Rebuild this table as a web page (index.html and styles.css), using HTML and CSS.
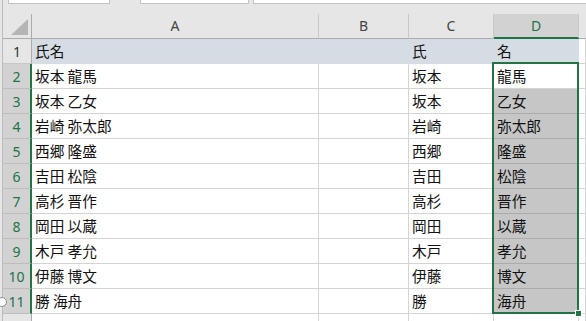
FILE: index.html
```html
<!DOCTYPE html>
<html lang="ja">
<head>
<meta charset="utf-8">
<title>Sheet1</title>
<link rel="stylesheet" href="styles.css">
</head>
<body>
<div class="app">
  <div class="frame">
    <div class="tabs">
      <span class="slot s1"></span>
      <span class="slot s2"></span>
      <span class="slot s3"></span>
    </div>
    <div class="grid">
      <div class="h corner"><svg width="28" height="24" viewBox="0 0 28 24"><polygon points="25,5 25,21 8,21" fill="#b5b5b5"/></svg></div>
      <div class="h">A</div>
      <div class="h">B</div>
      <div class="h">C</div>
      <div class="h h-sel">D</div>
      <div class="h h-end"></div>

      <div class="rh">1</div>
      <div class="c fill">氏名</div>
      <div class="c fill"></div>
      <div class="c fill">氏</div>
      <div class="c fill">名</div>
      <div class="c"></div>

      <div class="rh sel">2</div>
      <div class="c">坂本 龍馬</div>
      <div class="c"></div>
      <div class="c">坂本</div>
      <div class="c">龍馬</div>
      <div class="c"></div>

      <div class="rh sel">3</div>
      <div class="c">坂本 乙女</div>
      <div class="c"></div>
      <div class="c">坂本</div>
      <div class="c picked">乙女</div>
      <div class="c"></div>

      <div class="rh sel">4</div>
      <div class="c">岩崎 弥太郎</div>
      <div class="c"></div>
      <div class="c">岩崎</div>
      <div class="c picked">弥太郎</div>
      <div class="c"></div>

      <div class="rh sel">5</div>
      <div class="c">西郷 隆盛</div>
      <div class="c"></div>
      <div class="c">西郷</div>
      <div class="c picked">隆盛</div>
      <div class="c"></div>

      <div class="rh sel">6</div>
      <div class="c">吉田 松陰</div>
      <div class="c"></div>
      <div class="c">吉田</div>
      <div class="c picked">松陰</div>
      <div class="c"></div>

      <div class="rh sel">7</div>
      <div class="c">高杉 晋作</div>
      <div class="c"></div>
      <div class="c">高杉</div>
      <div class="c picked">晋作</div>
      <div class="c"></div>

      <div class="rh sel">8</div>
      <div class="c">岡田 以蔵</div>
      <div class="c"></div>
      <div class="c">岡田</div>
      <div class="c picked">以蔵</div>
      <div class="c"></div>

      <div class="rh sel">9</div>
      <div class="c">木戸 孝允</div>
      <div class="c"></div>
      <div class="c">木戸</div>
      <div class="c picked">孝允</div>
      <div class="c"></div>

      <div class="rh sel">10</div>
      <div class="c">伊藤 博文</div>
      <div class="c"></div>
      <div class="c">伊藤</div>
      <div class="c picked">博文</div>
      <div class="c"></div>

      <div class="rh sel">11</div>
      <div class="c">勝 海舟</div>
      <div class="c"></div>
      <div class="c">勝</div>
      <div class="c picked">海舟</div>
      <div class="c"></div>

      <div class="rh">12</div>
      <div class="c"></div>
      <div class="c"></div>
      <div class="c"></div>
      <div class="c"></div>
      <div class="c"></div>
    </div>
  </div>
  <div class="selection"></div>
  <div class="fill-handle"></div>
  <div class="touch-handle"></div>
</div>
</body>
</html>
```

FILE: styles.css
```css
* {
  box-sizing: border-box;
  margin: 0;
  padding: 0;
}

body {
  margin: 0;
  width: 586px;
  height: 321px;
  overflow: hidden;
  background: #fff;
  font-family: "Noto Sans CJK JP", "Noto Sans", sans-serif;
}

.app {
  position: relative;
  width: 586px;
  height: 321px;
  overflow: hidden;
  background: #e6e6e6;
}

.frame {
  margin-left: 2px;
  border-left: 1px solid #bcbcbc;
  height: 100%;
}

/* toolbar boxes peeking in at the top */
.tabs {
  height: 14px;
  display: flex;
  padding-left: 5px;
}

.slot {
  display: block;
  height: 4px;
  background: #fff;
  border: 1px solid #c3c3c3;
  border-top: 0;
}

.s1 { width: 102px; margin-right: 30px; }
.s2 { width: 109px; margin-right: 4px; }
.s3 { flex: 1; border-right: 0; }

.grid {
  display: grid;
  grid-template-columns: 29px 287px 90px 85px 85px 1fr;
  grid-auto-rows: 25px;
}

/* column headers */
.h {
  background: #e6e6e6;
  border-right: 1px solid #c8c8c8;
  border-bottom: 1px solid #ababab;
  text-align: center;
  font-family: "Noto Sans", "Liberation Sans", sans-serif;
  font-size: 14px;
  line-height: 24px;
  color: #444;
}

.corner {
  border-right: 1px solid #ababab;
}

.corner svg {
  display: block;
}

.h-sel {
  background: #d2d2d2;
  color: #217346;
  border-bottom: 2px solid #217346;
}

.h-end {
  border-right: 0;
}

/* row headers */
.rh {
  background: #e6e6e6;
  border-right: 1px solid #ababab;
  border-bottom: 1px solid #c8c8c8;
  text-align: center;
  font-family: "Noto Sans", "Liberation Sans", sans-serif;
  font-size: 14px;
  line-height: 25px;
  color: #333;
}

.rh.sel {
  background: #d2d2d2;
  color: #217346;
  border-right: 2px solid #217346;
  border-bottom-color: #bdbdbd;
}

/* cells */
.c {
  background: #fff;
  border-right: 1px solid #d4d4d4;
  border-bottom: 1px solid #d4d4d4;
  padding-left: 3px;
  font-size: 14.67px;
  line-height: 24px;
  color: #111;
  white-space: nowrap;
  overflow: hidden;
}

.c.fill {
  background: #d6dce4;
  border-color: #d6dce4;
}

.c.picked {
  background: #c6c6c6;
  border-bottom-color: #ababab;
}

/* active range outline */
.selection {
  position: absolute;
  left: 492px;
  top: 62px;
  width: 87px;
  height: 252px;
  border: 2px solid #217346;
}

.fill-handle {
  position: absolute;
  left: 575px;
  top: 310px;
  width: 7px;
  height: 7px;
  background: #217346;
  border: 1px solid #fff;
}

.touch-handle {
  position: absolute;
  left: -3px;
  top: 297px;
  width: 10px;
  height: 10px;
  border: 1px solid #8a8a8a;
  border-radius: 50%;
  background: #fff;
}
```
